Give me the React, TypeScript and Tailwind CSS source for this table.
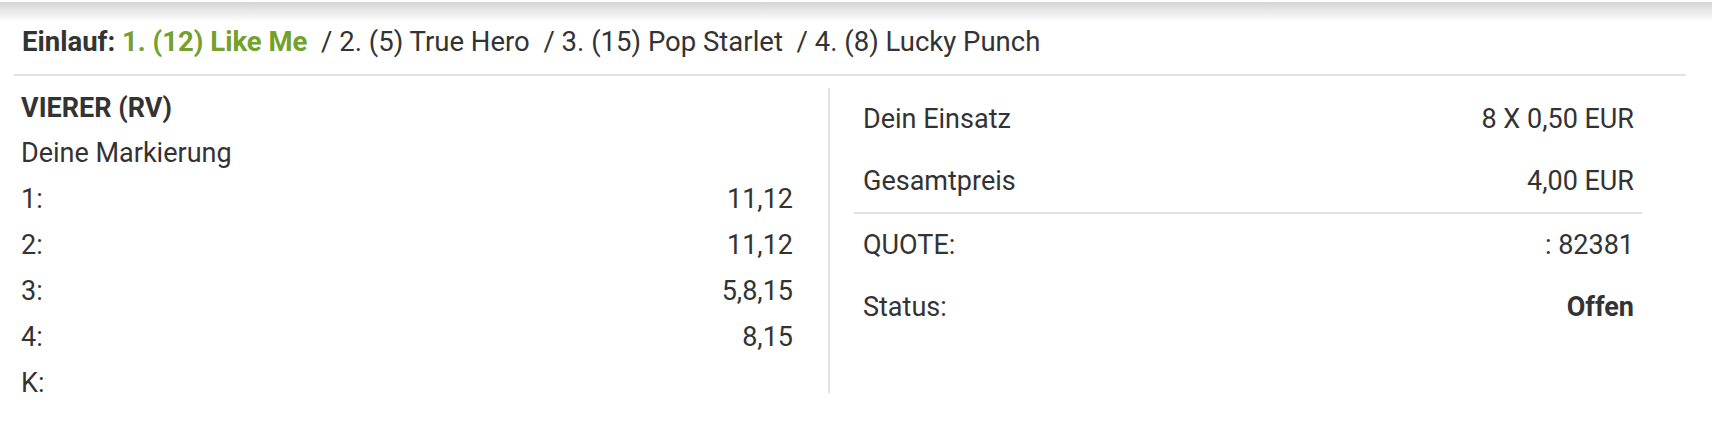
const finish = [
  { pos: 1, nr: 12, name: 'Like Me' },
  { pos: 2, nr: 5, name: 'True Hero' },
  { pos: 3, nr: 15, name: 'Pop Starlet' },
  { pos: 4, nr: 8, name: 'Lucky Punch' },
];

const marks = [
  { label: '1:', value: '11,12' },
  { label: '2:', value: '11,12' },
  { label: '3:', value: '5,8,15' },
  { label: '4:', value: '8,15' },
  { label: 'K:', value: '' },
];

function Row({ label, value, bold }: { label: string; value: string; bold?: boolean }) {
  return (
    <div className="flex h-[62px] items-center justify-between pl-[9px] pr-[8px] leading-[62px]">
      <span>{label}</span>
      <span className={bold ? 'font-bold' : ''}>{value}</span>
    </div>
  );
}

export default function App() {
  return (
    <div className="min-h-[422px] bg-white font-['Roboto',sans-serif] text-[27px] text-[#333]">
      <div className="h-[2px]" />
      <div className="h-[20px] bg-linear-to-b from-[#d5d5d5] to-white" />

      <div className="ml-[14px] mr-[26px]">
        {/* Einlauf */}
        <div className="mt-[2px] h-[36px] whitespace-pre pl-[8px] text-[27.5px] leading-[36px]">
          <span className="font-bold">Einlauf: </span>
          {finish.map((f, i) => (
            <span key={f.pos}>
              {i > 0 && '  / '}
              <span className={i === 0 ? 'font-bold text-[#74a02c]' : ''}>
                {f.pos}. ({f.nr}) {f.name}
              </span>
            </span>
          ))}
        </div>
        <div className="mt-[14px] h-[2px] bg-[#e2e2e2]" />

        <div className="flex items-start">
          {/* Markierung */}
          <div className="w-[814px] shrink-0 pl-[7px] pr-[35px] pt-[10px]">
            <div className="font-bold leading-[44px]">VIERER (RV)</div>
            <div className="leading-[46px]">Deine Markierung</div>
            {marks.map((m) => (
              <div key={m.label} className="flex justify-between leading-[46px]">
                <span>{m.label}</span>
                <span>{m.value}</span>
              </div>
            ))}
          </div>

          {/* Einsatz */}
          <div className="mt-[12px] h-[305px] flex-1 border-l-2 border-[#e2e2e2] pl-[24px] pr-[44px]">
            <Row label="Dein Einsatz" value="8 X 0,50 EUR" />
            <Row label="Gesamtpreis" value="4,00 EUR" />
            <div className="h-[2px] bg-[#e2e2e2]" />
            <Row label="QUOTE:" value=": 82381" />
            <Row label="Status:" value="Offen" bold />
          </div>
        </div>
      </div>
    </div>
  );
}
